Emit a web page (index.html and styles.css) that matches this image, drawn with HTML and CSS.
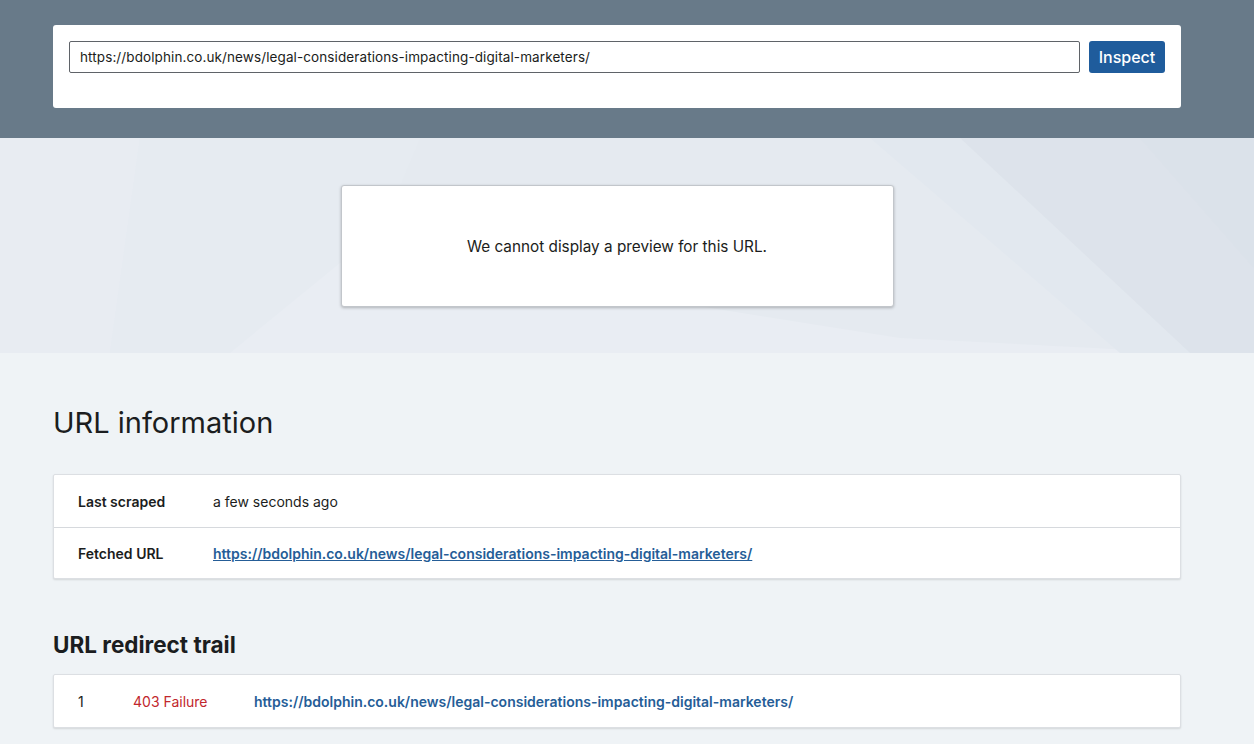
FILE: index.html
```html
<!DOCTYPE html>
<html lang="en">
<head>
<meta charset="utf-8">
<title>URL Inspector</title>
<link rel="stylesheet" href="styles.css">
</head>
<body>
<header class="topbar">
  <form class="search-card">
    <input class="url-input" type="text" value="https://bdolphin.co.uk/news/legal-considerations-impacting-digital-marketers/">
    <button class="btn-inspect" type="button">Inspect</button>
  </form>
</header>

<section class="hero">
  <svg class="hero-bg" viewBox="0 0 1254 215" preserveAspectRatio="none" aria-hidden="true">
    <rect x="0" y="0" width="1254" height="215" fill="#e5eaf0"/>
    <polygon points="0,0 140,0 110,215 0,215" fill="#e8ecf2"/>
    <polygon points="140,0 420,0 330,215 110,215" fill="#e6ebf1"/>
    <polygon points="230,215 340,125 520,140 900,200 1190,215" fill="#e9edf3"/>
    <polygon points="870,0 960,0 1190,215 1120,215" fill="#e2e8ef"/>
    <polygon points="960,0 1254,0 1254,215 1190,215" fill="#dde3eb"/>
    <polygon points="1140,0 1254,0 1254,130" fill="#dbe2ea"/>
  </svg>
  <div class="preview-card">
    <p>We cannot display a preview for this URL.</p>
  </div>
</section>

<main class="content">
  <h1 class="section-title">URL information</h1>
  <div class="panel">
    <div class="info-row">
      <div class="info-label">Last scraped</div>
      <div class="info-value">a few seconds ago</div>
    </div>
    <div class="info-row">
      <div class="info-label">Fetched URL</div>
      <div class="info-value"><a class="link-underline" href="#">https://bdolphin.co.uk/news/legal-considerations-impacting-digital-marketers/</a></div>
    </div>
  </div>

  <h2 class="sub-title">URL redirect trail</h2>
  <div class="panel">
    <div class="trail-row">
      <div class="trail-num">1</div>
      <div class="trail-status">403 Failure</div>
      <div class="trail-url"><a class="link-plain" href="#">https://bdolphin.co.uk/news/legal-considerations-impacting-digital-marketers/</a></div>
    </div>
  </div>
</main>
</body>
</html>
```

FILE: styles.css
```css
* { box-sizing: border-box; }

html, body {
  margin: 0;
  padding: 0;
}

body {
  font-family: "Inter", "Noto Sans", "Liberation Sans", sans-serif;
  color: #1b1d20;
  background: #eff3f6;
}

.topbar {
  background: #687a89;
  height: 138px;
  padding: 25px 73px 0 53px;
}

.search-card {
  background: #fff;
  border-radius: 3px;
  height: 83px;
  padding: 16px 16px 0 16px;
  display: flex;
  align-items: flex-start;
  gap: 9px;
  margin: 0;
}

.url-input {
  flex: 1;
  height: 32px;
  border: 1px solid #5f6368;
  border-radius: 2px;
  padding: 0 10px;
  font-family: inherit;
  font-size: 13.5px;
  letter-spacing: 0.1px;
  color: #1b1d20;
  background: #fff;
  outline: none;
}

.btn-inspect {
  width: 76px;
  height: 32px;
  border: none;
  border-radius: 3px;
  background: #1f5c9c;
  color: #fff;
  font-family: inherit;
  font-size: 16px;
  font-weight: 500;
  padding: 0;
}

.hero {
  position: relative;
  height: 215px;
  padding: 47px 73px 0 53px;
  display: flex;
  justify-content: center;
  align-items: flex-start;
  overflow: hidden;
}

.hero-bg {
  position: absolute;
  left: 0;
  top: 0;
  width: 100%;
  height: 100%;
}

.preview-card {
  position: relative;
  width: 553px;
  height: 122px;
  background: #fff;
  border: 1px solid #c2c6cb;
  border-radius: 3px;
  box-shadow: 0 1px 3px rgba(0, 0, 0, 0.25);
  display: flex;
  align-items: center;
  justify-content: center;
}

.preview-card p {
  margin: 0;
  font-size: 15.3px;
  color: #1b1d20;
}

.content {
  padding: 52px 73px 40px 53px;
}

.section-title {
  margin: 0;
  font-size: 29px;
  line-height: 36px;
  font-weight: 400;
  color: #1b1d20;
}

.sub-title {
  margin: 52px 0 0 0;
  font-size: 22.5px;
  line-height: 28px;
  font-weight: 700;
  color: #1b1d20;
}

.panel {
  background: #fff;
  border: 1px solid #dcdfe3;
  border-radius: 2px;
  box-shadow: 0 1px 2px rgba(0, 0, 0, 0.12);
}

.section-title + .panel {
  margin-top: 33px;
}

.sub-title + .panel {
  margin-top: 15px;
}

.info-row {
  display: flex;
  align-items: center;
  height: 52px;
  padding-left: 24px;
  font-size: 14px;
}

.info-row + .info-row {
  border-top: 1px solid #d6d9dd;
  height: 51px;
}

.info-label {
  width: 135px;
  font-weight: 600;
  color: #1b1d20;
}

.info-value {
  color: #1b1d20;
}

.link-underline {
  color: #255d97;
  font-weight: 600;
  text-decoration: underline;
}

.trail-row {
  display: flex;
  align-items: center;
  height: 52px;
  padding-left: 24px;
  font-size: 14px;
}

.trail-num {
  width: 55px;
  color: #1b1d20;
}

.trail-status {
  width: 121px;
  color: #c1272d;
}

.link-plain {
  color: #255d97;
  font-weight: 600;
  text-decoration: none;
}
```
